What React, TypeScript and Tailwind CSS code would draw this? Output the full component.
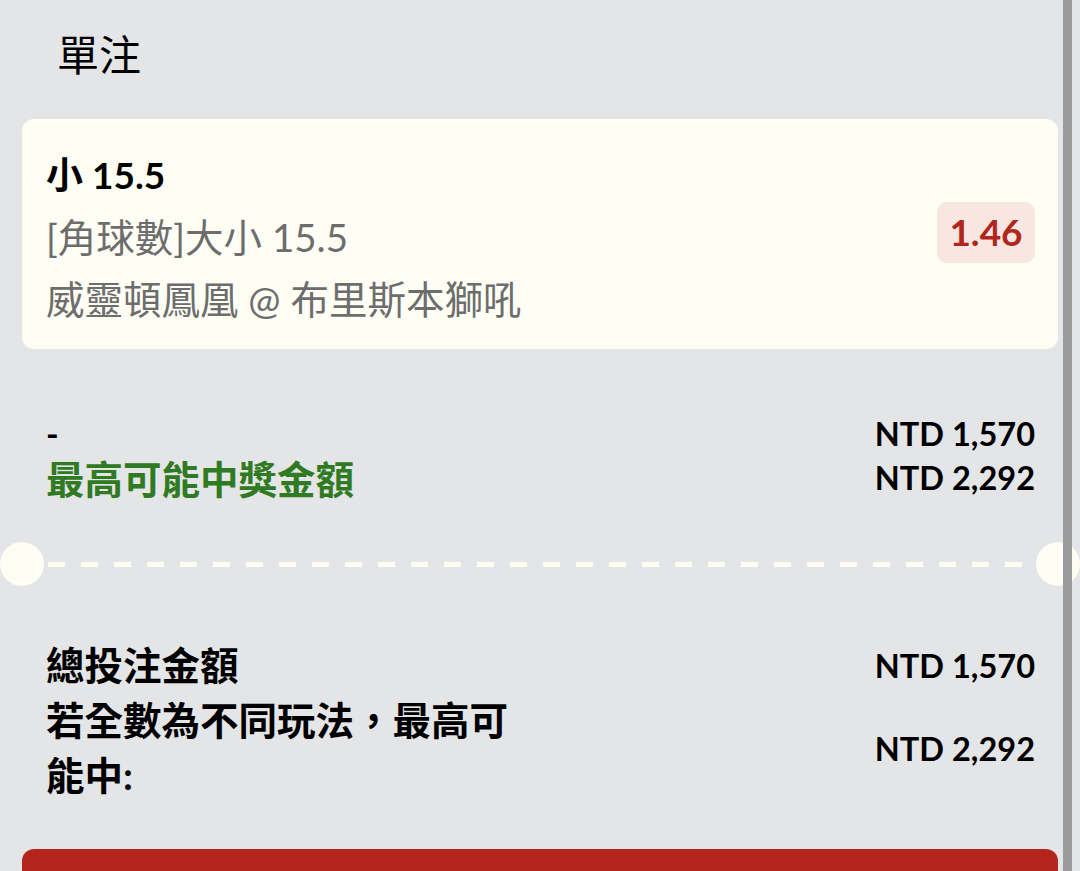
export default function App() {
  return (
    <div
      className="relative h-[871px] w-[1080px] overflow-hidden bg-[#e4e5e7] text-black"
      style={{ fontFamily: '"Lato", "Noto Sans CJK TC", sans-serif' }}
    >
      <div className="px-[22px]">
        {/* Header */}
        <h1 className="pt-[27px] pl-[35px] text-[42px] font-normal leading-[56px]">單注</h1>

        {/* Selection card */}
        <div className="mt-[36px] flex items-center justify-between rounded-xl bg-[#fffef5] pt-[25px] pb-[19px] pl-[24px] pr-[23px]">
          <div className="flex flex-col">
            <div className="text-[37px] font-bold leading-[62px]">小 15.5</div>
            <div className="text-[38.5px] leading-[62px] text-[#6d6d6d]">[角球數]大小 15.5</div>
            <div className="text-[38.5px] leading-[62px] text-[#6d6d6d]">威靈頓鳳凰 @ 布里斯本獅吼</div>
          </div>
          <div className="-mt-[10px] flex h-[61px] w-[98px] items-center justify-center rounded-[10px] bg-[#f8e7e1] text-[37px] font-bold text-[#b0261d]">
            1.46
          </div>
        </div>

        {/* Stake summary */}
        <div className="mt-[63px] flex justify-between pl-[24px] pr-[23px]">
          <div className="flex flex-col">
            <div className="text-[34px] font-bold leading-[44px]">-</div>
            <div className="text-[38.5px] font-bold leading-[46px] text-[#2f7a22]">最高可能中獎金額</div>
          </div>
          <div className="flex flex-col items-end text-[32.5px] font-bold">
            <div className="leading-[44px]">NTD 1,570</div>
            <div className="leading-[44px]">NTD 2,292</div>
          </div>
        </div>
      </div>

      {/* Ticket divider */}
      <div className="mt-[40px] flex h-[44px] items-center">
        <div className="h-[44px] w-[44px] shrink-0 rounded-full bg-[#fffef5]" />
        <div className="mx-[4px] h-[5px] flex-1 bg-[repeating-linear-gradient(to_right,#fffdf2_0_17px,transparent_17px_33px)]" />
        <div className="h-[44px] w-[44px] shrink-0 rounded-full bg-[#fffef5]" />
      </div>

      {/* Totals */}
      <div className="mt-[52px] flex flex-col px-[22px]">
        <div className="flex items-center justify-between pl-[24px] pr-[23px]">
          <div className="text-[38.5px] font-bold leading-[55px]">總投注金額</div>
          <div className="text-[32.5px] font-bold leading-[55px]">NTD 1,570</div>
        </div>
        <div className="flex items-center justify-between pl-[24px] pr-[23px]">
          <div className="w-[490px] text-[38.5px] font-bold leading-[55px]">若全數為不同玩法，最高可能中:</div>
          <div className="text-[32.5px] font-bold leading-[55px]">NTD 2,292</div>
        </div>

        <button className="mt-[46px] h-[60px] w-full rounded-t-xl bg-[#b3251d]" />
      </div>

      {/* Scrollbar */}
      <div className="absolute top-0 right-[8px] h-full w-[9px] bg-[#9b9b9b]" />
    </div>
  );
}
